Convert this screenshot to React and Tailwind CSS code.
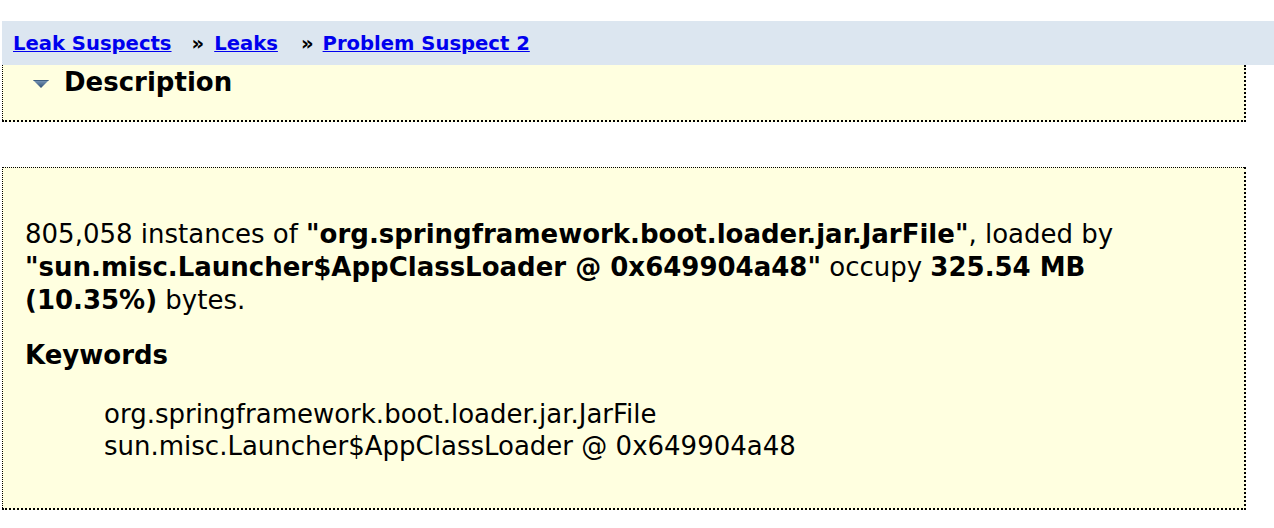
import React from 'react';

const font = { fontFamily: '"DejaVu Sans", Verdana, sans-serif' };

function Triangle() {
  return (
    <svg width="16" height="10" viewBox="0 0 16 10" className="block">
      <defs>
        <linearGradient id="tri" x1="0" y1="0" x2="0" y2="1">
          <stop offset="0" stopColor="#7d9bbd" />
          <stop offset="1" stopColor="#2f4f73" />
        </linearGradient>
      </defs>
      <polygon points="0,1 16,1 8,9" fill="url(#tri)" />
      <polygon points="0,1 16,1 15,2 1,2" fill="#3d5d80" />
    </svg>
  );
}

export default function App() {
  return (
    <div className="bg-white min-h-[528px] pt-[21px] text-black" style={font}>
      {/* breadcrumb */}
      <div className="ml-[2px] h-[44px] bg-[#dce6f0] flex items-center pl-[11px] pt-[2px] text-[19.6px] font-bold">
        <a href="#" className="text-[#0000ee] underline">Leak Suspects</a>
        <span className="ml-[20px] mr-[10px]">»</span>
        <a href="#" className="text-[#0000ee] underline">Leaks</a>
        <span className="ml-[23px] mr-[9px]">»</span>
        <a href="#" className="text-[#0000ee] underline">Problem Suspect 2</a>
      </div>

      {/* description header */}
      <div className="ml-[2px] w-[1244px] h-[57px] bg-[#ffffe0] border-l border-r-2 border-b-2 border-dotted border-black flex items-start pt-[1px]">
        <div className="flex items-center h-[32px]">
          <div className="ml-[30px] mr-[15px] mt-[3px]">
            <Triangle />
          </div>
          <span className="text-[26px] font-bold leading-none">Description</span>
        </div>
      </div>

      {/* body */}
      <div className="ml-[2px] mt-[45px] w-[1244px] h-[343px] bg-[#ffffe0] border-l border-t border-r-2 border-b-2 border-dotted border-black pl-[22px] pr-[30px] pt-[50px] text-[26px] leading-[33px]">
        <p>
          805,058 instances of <b>"org.springframework.boot.loader.jar.JarFile"</b>, loaded by{' '}
          <b>"sun.misc.Launcher$AppClassLoader @ 0x649904a48"</b> occupy <b>325.54 MB (10.35%)</b> bytes.
        </p>
        <p className="font-bold mt-[22px]">Keywords</p>
        <div className="ml-[79px] mt-[26px] leading-[32px]">
          <div>org.springframework.boot.loader.jar.JarFile</div>
          <div>sun.misc.Launcher$AppClassLoader @ 0x649904a48</div>
        </div>
      </div>
    </div>
  );
}
